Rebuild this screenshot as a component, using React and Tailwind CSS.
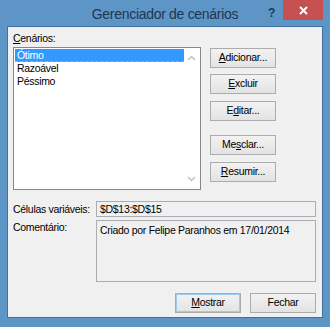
export default function App() {
  const font = { fontFamily: '"Liberation Sans", Arial, sans-serif' }
  return (
    <div className="w-[330px] h-[327px] bg-[#5d95c7] flex flex-col text-[10.5px] tracking-[-0.3px] text-black" style={font}>
      <div className="h-[26px] flex items-start relative">
        <div className="flex-1 pt-[4px] text-center text-[14px] text-[#1f3550]">Gerenciador de cenários</div>
        <div className="absolute left-[268px] top-[4px] text-[12px] font-bold text-[#1f3550]">?</div>
        <div className="absolute left-[283px] top-0 w-[40px] h-[20px] bg-[#c75050] flex items-center justify-center">
          <svg width="9" height="9" viewBox="0 0 9 9">
            <path d="M1 1L8 8M8 1L1 8" stroke="white" strokeWidth="2" />
          </svg>
        </div>
      </div>
      <div className="mx-[7px] h-[292px] border border-[#41729f] bg-[#f0f0f0] flex flex-col pl-[5px] pr-[6px] pt-[5px]">
        <div className="flex">
          <div className="flex flex-col">
            <div className="h-[13px] leading-[13px] mb-[2px]"><u>C</u>enários:</div>
            <div className="w-[188px] h-[143px] border border-[#828790] bg-white flex p-[1px]">
              <div className="flex-1 flex flex-col">
                <div className="h-[13px] leading-[12px] bg-[#3399ff] text-white pl-[2px] border-b border-dashed border-[#f0a030]">Ótimo</div>
                <div className="h-[13px] leading-[13px] pl-[2px]">Razoável</div>
                <div className="h-[13px] leading-[13px] pl-[2px]">Péssimo</div>
              </div>
              <div className="w-[15px] flex flex-col justify-between items-center py-[6px]">
                <svg width="9" height="6" viewBox="0 0 9 6"><path d="M1 5L4.5 1.5L8 5" stroke="#c2c2c2" strokeWidth="1.5" fill="none" /></svg>
                <svg width="9" height="6" viewBox="0 0 9 6"><path d="M1 1L4.5 4.5L8 1" stroke="#c2c2c2" strokeWidth="1.5" fill="none" /></svg>
              </div>
            </div>
          </div>
          <div className="ml-[9px] mt-[16px] flex flex-col w-[66px]">
            <Btn><u>A</u>dicionar...</Btn>
            <Btn className="mt-[6px]"><u>E</u>xcluir</Btn>
            <Btn className="mt-[7px]">E<u>d</u>itar...</Btn>
            <Btn className="mt-[14px]">Me<u>s</u>clar...</Btn>
            <Btn className="mt-[7px]"><u>R</u>esumir...</Btn>
          </div>
        </div>
        <div className="flex mt-[11px]">
          <div className="w-[83px] shrink-0 whitespace-nowrap leading-[16px]">Células variáveis:</div>
          <div className="w-[220px] h-[16px] border border-[#abadb3] bg-[#f0f0f0] pl-[3px] leading-[14px] whitespace-nowrap">$D$13:$D$15</div>
        </div>
        <div className="flex mt-[3px]">
          <div className="w-[83px] shrink-0 whitespace-nowrap leading-[14px]">Comentário:</div>
          <div className="w-[220px] h-[62px] border border-[#abadb3] bg-[#f0f0f0] pl-[3px] pt-[2px] leading-[14px] whitespace-nowrap">Criado por Felipe Paranhos em 17/01/2014</div>
        </div>
        <div className="flex justify-end mt-[11px] gap-[9px]">
          <Btn className="w-[66px] border-[#3c7fb1] shadow-[inset_0_0_0_1px_#9ccbf0]"><u>M</u>ostrar</Btn>
          <Btn className="w-[66px]">Fechar</Btn>
        </div>
      </div>
    </div>
  )
}

function Btn({ children, className = '' }) {
  return (
    <div className={`h-[20px] border border-[#acacac] bg-gradient-to-b from-[#f2f2f2] to-[#e3e3e3] flex items-center justify-center whitespace-nowrap ${className}`}>
      {children}
    </div>
  )
}
